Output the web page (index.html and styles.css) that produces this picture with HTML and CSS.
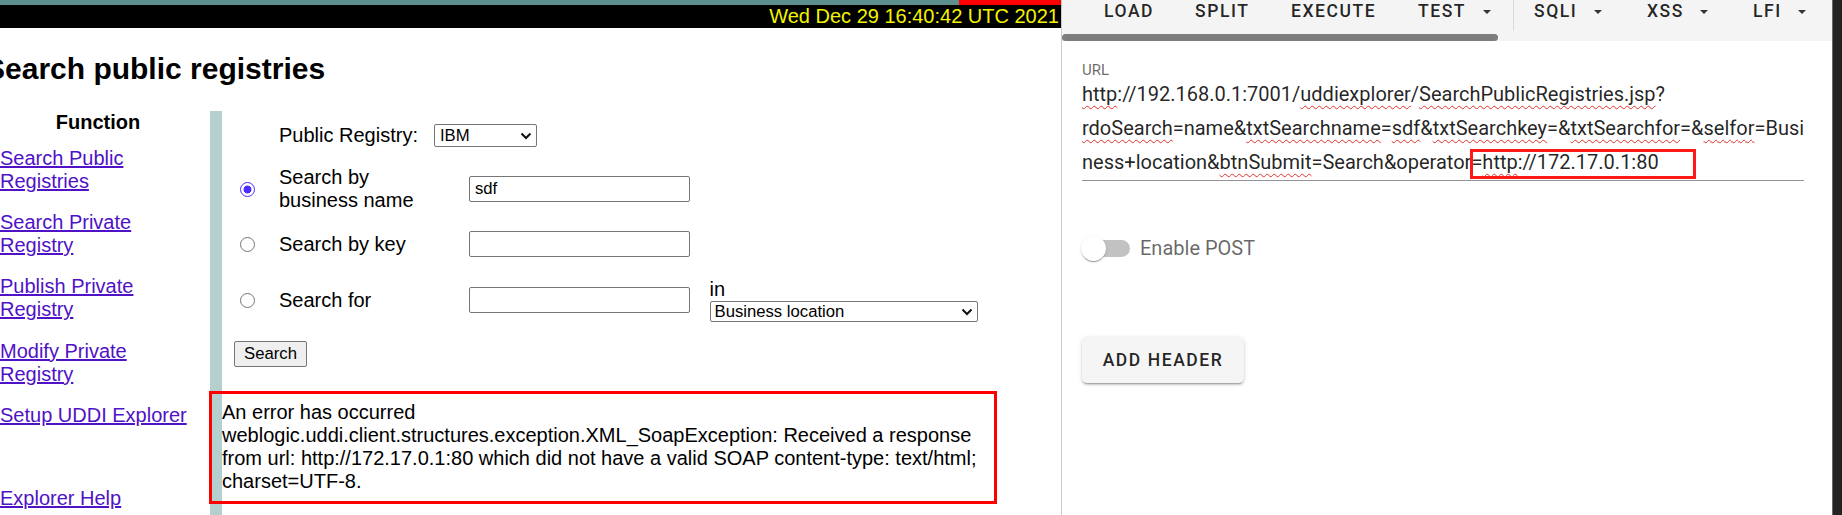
FILE: index.html
```html
<!DOCTYPE html>
<html lang="en">
<head>
<meta charset="utf-8">
<title>Search public registries</title>
<link rel="stylesheet" href="styles.css">
</head>
<body>
<div class="screen">
  <div class="left">
    <div class="strip"><div class="strip-teal"></div><div class="strip-red"></div></div>
    <div class="datebar">Wed Dec 29 16:40:42 UTC 2021</div>
    <h2 class="title">Search public registries</h2>
    <div class="layout">
      <nav class="nav">
        <div class="nav-head">Function</div>
        <a class="nav-link first" href="#">Search Public<br>Registries</a>
        <a class="nav-link" href="#">Search Private<br>Registry</a>
        <a class="nav-link" href="#">Publish Private<br>Registry</a>
        <a class="nav-link" href="#">Modify Private<br>Registry</a>
        <a class="nav-link" href="#">Setup UDDI Explorer</a>
        <a class="nav-link help" href="#">Explorer Help</a>
      </nav>
      <div class="divider"></div>
      <div class="main">
        <div class="form">
          <div class="row-registry">
            <span class="label">Public Registry:</span>
            <div class="select select-ibm"><span>IBM</span>
              <svg class="chev" width="12" height="8" viewBox="0 0 12 8"><path d="M1.5 1.5 L6 6 L10.5 1.5" fill="none" stroke="#111" stroke-width="2"/></svg>
            </div>
          </div>

          <span class="radio on"></span>
          <span class="label">Search by<br>business name</span>
          <div class="input">sdf</div>
          <span></span>

          <span class="radio"></span>
          <span class="label">Search by key</span>
          <div class="input"></div>
          <span></span>

          <span class="radio r4"></span>
          <span class="label r4">Search for</span>
          <div class="input r4"></div>
          <div class="in-col r4">
            <span class="label">in</span>
            <div class="select select-loc"><span>Business location</span>
              <svg class="chev" width="12" height="8" viewBox="0 0 12 8"><path d="M1.5 1.5 L6 6 L10.5 1.5" fill="none" stroke="#111" stroke-width="2"/></svg>
            </div>
          </div>
        </div>
        <button class="search-btn" type="button">Search</button>
        <div class="error">An error has occurred<br>weblogic.uddi.client.structures.exception.XML_SoapException: Received a response from url: http://172.17.0.1:80 which did not have a valid SOAP content-type: text/html; charset=UTF-8.</div>
      </div>
    </div>
  </div>

  <div class="right">
    <div class="toolbar">
      <div class="tb-row">
        <span class="tb-btn">Load</span>
        <span class="tb-btn">Split</span>
        <span class="tb-btn">Execute</span>
        <span class="tb-btn">Test<i class="tb-arrow"></i></span>
        <span class="tb-sep"></span>
        <span class="tb-btn">SQLI<i class="tb-arrow"></i></span>
        <span class="tb-btn">XSS<i class="tb-arrow"></i></span>
        <span class="tb-btn">LFI<i class="tb-arrow"></i></span>
      </div>
      <div class="tb-scroll"><div class="tb-thumb"></div></div>
    </div>
    <div class="panel">
      <div class="field-label">URL</div>
      <div class="field-text">
        <div class="url-line"><span class="sp">http</span>://192.168.0.1:7001/<span class="sp">uddiexplorer</span>/<span class="sp">SearchPublicRegistries.jsp</span>?</div>
        <div class="url-line"><span class="sp">rdoSearch</span>=name&amp;<span class="sp">txtSearchname</span>=<span class="sp">sdf</span>&amp;<span class="sp">txtSearchkey</span>=&amp;<span class="sp">txtSearchfor</span>=&amp;<span class="sp">selfor</span>=Busi</div>
        <div class="url-line">ness+location&amp;<span class="sp">btnSubmit</span>=Search&amp;operator<span class="mark">=<span class="sp">http</span>://172.17.0.1:80</span></div>
      </div>
      <div class="switch-row">
        <div class="switch"><div class="switch-track"></div><div class="switch-thumb"></div></div>
        <span class="switch-label">Enable POST</span>
      </div>
      <button class="add-header" type="button">Add Header</button>
    </div>
  </div>
  <div class="edge"></div>
</div>
</body>
</html>
```

FILE: styles.css
```css
* { box-sizing: border-box; }
html, body { margin: 0; padding: 0; }
body { width: 1842px; height: 515px; overflow: hidden; background: #fff; }

.screen { display: flex; height: 515px; }

/* ---------- left pane ---------- */
.left {
  width: 1061px; flex: none; overflow: hidden;
  font-family: "Liberation Sans", Arial, sans-serif; font-size: 20px; color: #000;
}
.strip { display: flex; height: 5px; }
.strip-teal { flex: 1; background: #5e8f8f; }
.strip-red { width: 102px; background: #ff0000; }
.datebar {
  height: 23px; line-height: 23px; background: #000; color: #f4f400;
  text-align: right; padding-right: 2px; white-space: nowrap;
}
.title {
  margin: 24px 0 0 -15px; font-size: 30px; line-height: 34px;
  font-weight: bold; white-space: nowrap;
}
.layout { display: flex; margin-top: 25px; height: 410px; }

.nav {
  width: 196px; flex: none; margin-right: 14px;
  display: flex; flex-direction: column; align-items: flex-start;
}
.nav-head { align-self: stretch; text-align: center; font-weight: bold; line-height: 23px; }
.nav-link { color: #4f12c6; line-height: 23px; margin-top: 18.2px; }
.nav-link.first { margin-top: 13px; }
.nav-link.help { margin-top: 60px; }

.divider { width: 12px; flex: none; background: #b5cfcf; }

.main { flex: 1; padding-top: 13px; }
.form {
  display: grid; grid-template-columns: 57px 190px 240.5px auto;
  row-gap: 19px; align-items: center; justify-items: start;
}
.label { line-height: 23px; white-space: nowrap; }
.r4 { margin-top: 2px; }
.row-registry { grid-column: 1 / 5; margin-left: 57px; display: flex; align-items: center; gap: 16px; }

.select {
  display: flex; align-items: center; justify-content: space-between;
  border: 1px solid #767676; border-radius: 2px; background: #fff;
  font-size: 16.7px; padding: 0 4px 0 5px; color: #000;
}
.select-ibm { width: 103px; height: 23px; }
.select-loc { width: 268px; height: 21px; padding-left: 4px; }
.chev { flex: none; }

.radio {
  width: 15px; height: 15px; margin-left: 18px; border-radius: 50%;
  border: 1px solid #767676; background: #fff;
}
.radio.r4 { margin-top: 2px; }
.radio.on {
  border: 1.5px solid #4a2cff;
  background: radial-gradient(circle, #4a2cff 0 3.6px, #fff 4.3px);
}
.input {
  width: 221px; height: 26px; border: 1px solid #767676; border-radius: 2px;
  font-size: 16.7px; line-height: 24px; padding-left: 5px;
}
.in-col { display: flex; flex-direction: column; align-items: flex-start; }

.search-btn {
  display: block; margin: 19px 0 0 12px; width: 73px; height: 26px; padding: 0;
  font-family: "Liberation Sans", Arial, sans-serif; font-size: 16.7px; color: #000;
  background: #efefef; border: 1px solid #767676; border-radius: 2px;
}
.error {
  position: relative; margin-top: 34px; width: 770px; line-height: 23px;
}
.error::after {
  content: ""; position: absolute; top: -10px; left: -13px; right: -5px; bottom: -11px;
  border: 3px solid #ff0000;
}

/* ---------- right pane ---------- */
.right {
  width: 771px; flex: none; border-left: 1px solid #cbcbcb; background: #fff;
  font-family: Roboto, "Noto Sans", sans-serif;
}
.edge { flex: 1; background: #232323; border-left: 1px solid #6a6a6a; }

.toolbar { height: 41px; background: #f4f4f4; }
.tb-row {
  display: grid; grid-template-columns: 91px 96px 127px 95px 21px 113px 106px auto;
  padding-left: 42px; height: 31px;
}
.tb-btn {
  display: flex; align-items: flex-start; font-weight: 500; font-size: 17.5px;
  letter-spacing: 1.56px; line-height: 22px; color: rgba(0,0,0,.87);
  text-transform: uppercase; white-space: nowrap;
}
.tb-arrow {
  width: 0; height: 0; margin: 9.5px 0 0 16.5px;
  border-left: 4px solid transparent; border-right: 4px solid transparent;
  border-top: 4.5px solid #333;
}
.tb-sep { border-left: 1px solid #dadada; }
.tb-scroll { margin-top: 3px; height: 7px; }
.tb-thumb { width: 436px; height: 7px; border-radius: 4px; background: #7d7d7d; }

.panel { padding: 22px 28px 0 20px; }
.field-label { font-size: 15px; line-height: 14px; color: rgba(0,0,0,.6); }
.field-text {
  width: 722px; font-size: 20px; line-height: 34px; color: rgba(0,0,0,.87);
  padding-bottom: 1px; border-bottom: 1px solid #949494; white-space: nowrap;
}
.sp {
  text-decoration: underline wavy #e5302a; text-decoration-thickness: 1px;
  text-underline-offset: 4px; text-decoration-skip-ink: none;
}
.mark { position: relative; display: inline-block; line-height: 34px; }
.mark::after {
  content: ""; position: absolute; left: -1px; right: -37px; top: 4px; bottom: 0;
  border: 3px solid #ff1a1a;
}

.switch-row { display: flex; align-items: center; margin-top: 54.5px; height: 25px; }
.switch { position: relative; width: 48px; height: 25px; display: flex; align-items: center; }
.switch-track { width: 47px; height: 17px; margin-left: 1px; border-radius: 9px; background: #c2c2c2; }
.switch-thumb {
  position: absolute; left: -1.5px; top: 0; width: 25px; height: 25px; border-radius: 50%;
  background: #fff;
  box-shadow: 0 2px 1px -1px rgba(0,0,0,.2), 0 1px 1px 0 rgba(0,0,0,.14), 0 1px 3px 0 rgba(0,0,0,.12);
}
.switch-label { margin-left: 10px; font-size: 20px; color: rgba(0,0,0,.6); }

.add-header {
  display: block; margin-top: 76.5px; width: 162px; height: 46px; padding: 0;
  border: none; border-radius: 5px; background: #f5f5f5;
  font-family: Roboto, "Noto Sans", sans-serif; font-weight: 500; font-size: 17.5px;
  letter-spacing: 1.56px; text-transform: uppercase; color: rgba(0,0,0,.87);
  box-shadow: 0 3px 1px -2px rgba(0,0,0,.2), 0 2px 2px 0 rgba(0,0,0,.14), 0 1px 5px 0 rgba(0,0,0,.12);
}
```
